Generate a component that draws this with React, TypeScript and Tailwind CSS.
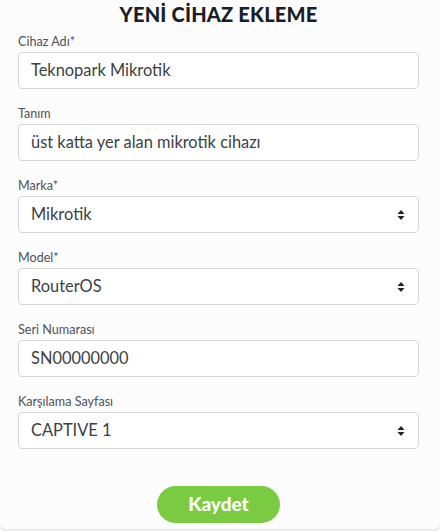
import React from 'react';

const fields = [
  { label: 'Cihaz Adı*', value: 'Teknopark Mikrotik', select: false },
  { label: 'Tanım', value: 'üst katta yer alan mikrotik cihazı', select: false },
  { label: 'Marka*', value: 'Mikrotik', select: true },
  { label: 'Model*', value: 'RouterOS', select: true },
  { label: 'Seri Numarası', value: 'SN00000000', select: false },
  { label: 'Karşılama Sayfası', value: 'CAPTIVE 1', select: true },
];

const Arrows = () => (
  <svg width="8" height="11" viewBox="0 0 8 11" className="absolute right-[13px] top-1/2 -translate-y-1/2">
    <path d="M4 0.5 L7.5 4.5 H0.5 Z" fill="#222" />
    <path d="M4 10.5 L7.5 6.5 H0.5 Z" fill="#222" />
  </svg>
);

const App: React.FC = () => {
  return (
    <div className="min-h-[531px] w-[440px] bg-[#f4f5f7]" style={{ fontFamily: 'Lato, "Open Sans", sans-serif' }}>
      <div className="h-[529px] bg-[#fcfcfd] rounded-b-[6px] shadow-[0_1px_1px_rgba(0,0,0,0.06)] px-[18px]">
        <div className="w-[401px] flex flex-col">
          <h1 className="text-center text-[20px] leading-[28px] font-black text-[#1b1e26] tracking-[0.2px]">YENİ CİHAZ EKLEME</h1>
          <div className="mt-[6px] flex flex-col gap-[17px]">
            {fields.map((f) => (
              <div key={f.label} className="flex flex-col gap-[2px]">
                <div className="text-[12.6px] leading-[16px] text-[#4f5359]">{f.label}</div>
                <div className="relative h-[37px] bg-white border border-[#d3d6db] rounded-[4px] flex items-center pl-[12px]">
                  <span className="text-[16.4px] text-[#3c3f45]">{f.value}</span>
                  {f.select && <Arrows />}
                </div>
              </div>
            ))}
          </div>
          <div className="flex justify-center mt-[37px]">
            <button className="w-[123px] h-[37px] rounded-full bg-[#7acb41] text-white text-[19px] font-black">Kaydet</button>
          </div>
        </div>
      </div>
    </div>
  );
};

export default App;
